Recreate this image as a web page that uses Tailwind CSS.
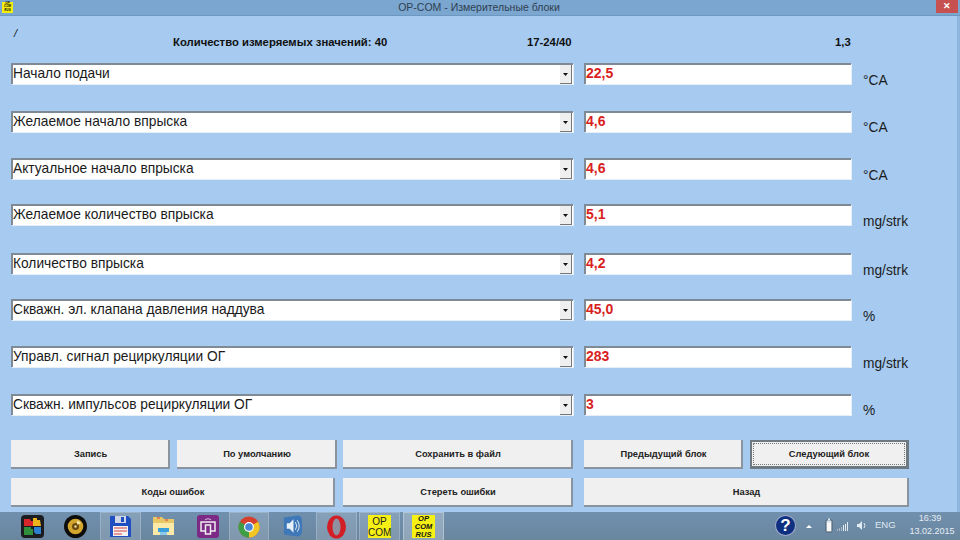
<!DOCTYPE html>
<html><head><meta charset="utf-8"><script src="https://cdn.jsdelivr.net/npm/@tailwindcss/browser@4"></script></head>
<body class="m-0 overflow-hidden">
<div class="w-[960px] h-[540px] flex flex-col bg-[#a6caf0] font-['Liberation_Sans',sans-serif] text-black overflow-hidden">
  <div class="h-4 shrink-0 bg-[#7ba6cf] border-b border-[#6c97c0] flex items-center relative">
    <div class="absolute left-[2px] top-[2px] w-[11px] h-[11px] bg-[#f6ee10] text-[3px] leading-[3.4px] font-bold italic text-center text-black">OP<br>COM<br>RUS</div>
    <div class="w-full text-center text-[10.500px] text-[#2f3f52] pr-[2px]">OP-COM - Измерительные блоки</div>
    <div class="absolute right-[2px] top-0 w-[22px] h-[13px] bg-[#c75050] flex items-center justify-center text-white text-[9px] font-bold">✕</div>
  </div>
  <div class="flex-1 flex flex-col pl-[11px] border-r-[3px] border-[#8fb6de]">
    <div class="h-[47px] shrink-0 relative text-[11.300px] font-bold text-[#111]">
      <div class="absolute left-[3px] top-[9px] italic font-normal text-[11px]">/</div>
      <div class="flex pl-[162px] pt-[19px] leading-[14px]">
        <span class="w-[354px]">Количество измеряемых значений: 40</span>
        <span class="w-[308px]">17-24/40</span>
        <span>1,3</span>
      </div>
    </div>
    <div class="flex flex-col">
      <div class="flex h-[21px]">
        <div class="w-[562px] flex bg-white border-t-2 border-l-2 border-[#808a94] shadow-[1px_1px_0_#e6eef6]"><span class="flex-1 text-[13.750px] leading-[17px] text-[#1a1a1a]">Начало подачи</span><span class="w-[12px] mr-[1px] bg-[#efefef] border-r border-b border-[#777] flex items-center justify-center"><svg width="5" height="3" viewBox="0 0 5 3"><path d="M0 0h5L2.500 3z" fill="#111"/></svg></span></div>
        <div class="w-[267px] ml-[11px] bg-white border-t-2 border-l-2 border-[#808a94] shadow-[1px_1px_0_#e6eef6] text-[14px] leading-[17px] font-bold text-[#d81e1e]">22,5</div>
        <div class="ml-[12px] pt-[10px] text-[13.750px] leading-[16px] text-[#1c1c1c] whitespace-nowrap">°CA</div>
      </div>
      <div class="flex h-[21px] mt-[27px]">
        <div class="w-[562px] flex bg-white border-t-2 border-l-2 border-[#808a94] shadow-[1px_1px_0_#e6eef6]"><span class="flex-1 text-[13.750px] leading-[17px] text-[#1a1a1a]">Желаемое начало впрыска</span><span class="w-[12px] mr-[1px] bg-[#efefef] border-r border-b border-[#777] flex items-center justify-center"><svg width="5" height="3" viewBox="0 0 5 3"><path d="M0 0h5L2.500 3z" fill="#111"/></svg></span></div>
        <div class="w-[267px] ml-[11px] bg-white border-t-2 border-l-2 border-[#808a94] shadow-[1px_1px_0_#e6eef6] text-[14px] leading-[17px] font-bold text-[#d81e1e]">4,6</div>
        <div class="ml-[12px] pt-[9px] text-[13.750px] leading-[16px] text-[#1c1c1c] whitespace-nowrap">°CA</div>
      </div>
      <div class="flex h-[21px] mt-[26px]">
        <div class="w-[562px] flex bg-white border-t-2 border-l-2 border-[#808a94] shadow-[1px_1px_0_#e6eef6]"><span class="flex-1 text-[13.750px] leading-[17px] text-[#1a1a1a]">Актуальное начало впрыска</span><span class="w-[12px] mr-[1px] bg-[#efefef] border-r border-b border-[#777] flex items-center justify-center"><svg width="5" height="3" viewBox="0 0 5 3"><path d="M0 0h5L2.500 3z" fill="#111"/></svg></span></div>
        <div class="w-[267px] ml-[11px] bg-white border-t-2 border-l-2 border-[#808a94] shadow-[1px_1px_0_#e6eef6] text-[14px] leading-[17px] font-bold text-[#d81e1e]">4,6</div>
        <div class="ml-[12px] pt-[10px] text-[13.750px] leading-[16px] text-[#1c1c1c] whitespace-nowrap">°CA</div>
      </div>
      <div class="flex h-[21px] mt-[25px]">
        <div class="w-[562px] flex bg-white border-t-2 border-l-2 border-[#808a94] shadow-[1px_1px_0_#e6eef6]"><span class="flex-1 text-[13.750px] leading-[17px] text-[#1a1a1a]">Желаемое количество впрыска</span><span class="w-[12px] mr-[1px] bg-[#efefef] border-r border-b border-[#777] flex items-center justify-center"><svg width="5" height="3" viewBox="0 0 5 3"><path d="M0 0h5L2.500 3z" fill="#111"/></svg></span></div>
        <div class="w-[267px] ml-[11px] bg-white border-t-2 border-l-2 border-[#808a94] shadow-[1px_1px_0_#e6eef6] text-[14px] leading-[17px] font-bold text-[#d81e1e]">5,1</div>
        <div class="ml-[12px] pt-[10px] text-[13.750px] leading-[16px] text-[#1c1c1c] whitespace-nowrap">mg/strk</div>
      </div>
      <div class="flex h-[21px] mt-[28px]">
        <div class="w-[562px] flex bg-white border-t-2 border-l-2 border-[#808a94] shadow-[1px_1px_0_#e6eef6]"><span class="flex-1 text-[13.750px] leading-[17px] text-[#1a1a1a]">Количество впрыска</span><span class="w-[12px] mr-[1px] bg-[#efefef] border-r border-b border-[#777] flex items-center justify-center"><svg width="5" height="3" viewBox="0 0 5 3"><path d="M0 0h5L2.500 3z" fill="#111"/></svg></span></div>
        <div class="w-[267px] ml-[11px] bg-white border-t-2 border-l-2 border-[#808a94] shadow-[1px_1px_0_#e6eef6] text-[14px] leading-[17px] font-bold text-[#d81e1e]">4,2</div>
        <div class="ml-[12px] pt-[10px] text-[13.750px] leading-[16px] text-[#1c1c1c] whitespace-nowrap">mg/strk</div>
      </div>
      <div class="flex h-[21px] mt-[25px]">
        <div class="w-[562px] flex bg-white border-t-2 border-l-2 border-[#808a94] shadow-[1px_1px_0_#e6eef6]"><span class="flex-1 text-[13.750px] leading-[17px] text-[#1a1a1a]">Скважн. эл. клапана давления наддува</span><span class="w-[12px] mr-[1px] bg-[#efefef] border-r border-b border-[#777] flex items-center justify-center"><svg width="5" height="3" viewBox="0 0 5 3"><path d="M0 0h5L2.500 3z" fill="#111"/></svg></span></div>
        <div class="w-[267px] ml-[11px] bg-white border-t-2 border-l-2 border-[#808a94] shadow-[1px_1px_0_#e6eef6] text-[14px] leading-[17px] font-bold text-[#d81e1e]">45,0</div>
        <div class="ml-[12px] pt-[10px] text-[13.750px] leading-[16px] text-[#1c1c1c] whitespace-nowrap">%</div>
      </div>
      <div class="flex h-[21px] mt-[26px]">
        <div class="w-[562px] flex bg-white border-t-2 border-l-2 border-[#808a94] shadow-[1px_1px_0_#e6eef6]"><span class="flex-1 text-[13.750px] leading-[17px] text-[#1a1a1a]">Управл. сигнал рециркуляции ОГ</span><span class="w-[12px] mr-[1px] bg-[#efefef] border-r border-b border-[#777] flex items-center justify-center"><svg width="5" height="3" viewBox="0 0 5 3"><path d="M0 0h5L2.500 3z" fill="#111"/></svg></span></div>
        <div class="w-[267px] ml-[11px] bg-white border-t-2 border-l-2 border-[#808a94] shadow-[1px_1px_0_#e6eef6] text-[14px] leading-[17px] font-bold text-[#d81e1e]">283</div>
        <div class="ml-[12px] pt-[10px] text-[13.750px] leading-[16px] text-[#1c1c1c] whitespace-nowrap">mg/strk</div>
      </div>
      <div class="flex h-[21px] mt-[27px]">
        <div class="w-[562px] flex bg-white border-t-2 border-l-2 border-[#808a94] shadow-[1px_1px_0_#e6eef6]"><span class="flex-1 text-[13.750px] leading-[17px] text-[#1a1a1a]">Скважн. импульсов рециркуляции ОГ</span><span class="w-[12px] mr-[1px] bg-[#efefef] border-r border-b border-[#777] flex items-center justify-center"><svg width="5" height="3" viewBox="0 0 5 3"><path d="M0 0h5L2.500 3z" fill="#111"/></svg></span></div>
        <div class="w-[267px] ml-[11px] bg-white border-t-2 border-l-2 border-[#808a94] shadow-[1px_1px_0_#e6eef6] text-[14px] leading-[17px] font-bold text-[#d81e1e]">3</div>
        <div class="ml-[12px] pt-[9px] text-[13.750px] leading-[16px] text-[#1c1c1c] whitespace-nowrap">%</div>
      </div>
    </div>
    <div class="mt-[25px] flex h-[29px] text-[9.300px] font-bold text-[#222]">
      <div class="w-[159px] bg-[#f0f0f0] border-r-2 border-b-2 border-[#8a949e] flex items-center justify-center pt-[3px] pl-[2px]">Запись</div>
      <div class="w-[160px] ml-[7px] bg-[#f0f0f0] border-r-2 border-b-2 border-[#8a949e] flex items-center justify-center pt-[3px] pl-[2px]">По умолчанию</div>
      <div class="w-[230px] ml-[6px] bg-[#f0f0f0] border-r-2 border-b-2 border-[#8a949e] flex items-center justify-center pt-[3px] pl-[2px]">Сохранить в файл</div>
      <div class="w-[159px] ml-[11px] bg-[#f0f0f0] border-r-2 border-b-2 border-[#8a949e] flex items-center justify-center pt-[3px] pl-[2px]">Предыдущий блок</div>
      <div class="w-[159px] ml-[7px] bg-[#f0f0f0] border-2 border-r-3 border-b-3 border-[#6f7982] flex items-center justify-center p-[1px]"><div class="w-full h-full border border-dotted border-[#777] flex items-center justify-center pt-[1px]">Следующий блок</div></div>
    </div>
    <div class="mt-[9px] flex h-[29px] text-[9.300px] font-bold text-[#222]">
      <div class="w-[324px] bg-[#f0f0f0] border-r-2 border-b-2 border-[#8a949e] flex items-center justify-center pt-[3px] pl-[2px]">Коды ошибок</div>
      <div class="w-[230px] ml-[8px] bg-[#f0f0f0] border-r-2 border-b-2 border-[#8a949e] flex items-center justify-center pt-[3px] pl-[2px]">Стереть ошибки</div>
      <div class="w-[325px] ml-[11px] bg-[#f0f0f0] border-r-2 border-b-2 border-[#8a949e] flex items-center justify-center pt-[3px] pl-[2px]">Назад</div>
    </div>
  </div>
  <div class="h-[28px] shrink-0 bg-[linear-gradient(#7090ae,#6a869f)] flex items-stretch relative">
    <div class="w-[41px] ml-[12px] flex items-center justify-center">
      <svg width="23" height="23" viewBox="0 0 23 23"><rect width="23" height="23" rx="4" fill="#1c1c20"/><path d="M3 4h6l1 2h2v5H3z" fill="#d8262a"/><path d="M12 3h4v2h3l1 6h-8z" fill="#eeb21c"/><path d="M3 12h7v2h2v6H3z" fill="#2f8f3a"/><path d="M13 12h7v7h-5l-2-2z" fill="#2f7fd0"/></svg>
    </div>
    <div class="w-[41px] ml-[2px] flex items-center justify-center">
      <svg width="23" height="23" viewBox="0 0 23 23"><circle cx="11.500" cy="11.500" r="11.500" fill="#0c0c0c"/><circle cx="11.500" cy="11.500" r="7.800" fill="#d2a52c"/><circle cx="11.500" cy="11.500" r="3.500" fill="#6b4a10"/><circle cx="11.500" cy="11.500" r="1.200" fill="#e8d9a0"/><path d="M13 5.500a7 7 0 0 1 4 3l-4 1z" fill="#f4e6a8"/></svg>
    </div>
    <div class="w-[41px] ml-[4px] flex items-center justify-center bg-white/15 border-x border-t border-white/20">
      <svg width="23" height="23" viewBox="0 0 23 23"><path d="M1 1h18l3 3v18H1z" fill="#1f4fc0"/><rect x="6" y="1" width="11" height="7" fill="#cfd6e6"/><rect x="12" y="2" width="3" height="5" fill="#1f4fc0"/><rect x="4" y="11" width="15" height="10" fill="#f2f2f2"/><path d="M5 13h13M5 16h13M5 19h8" stroke="#d84040"/></svg>
    </div>
    <div class="w-[41px] ml-[2px] flex items-center justify-center">
      <svg width="23" height="22" viewBox="0 0 23 22"><path d="M1 2h9l2 2h10v16H1z" fill="#e8c766"/><path d="M5 3l3 0M13 5h3" stroke="#d84040"/><path d="M1 8h21v12H1z" fill="#fbe9a8"/><rect x="6" y="13" width="11" height="4" fill="#3aa0dc"/><rect x="8" y="17" width="7" height="3" fill="#8bcbe8"/></svg>
    </div>
    <div class="w-[41px] ml-[3px] flex items-center justify-center">
      <svg width="22" height="23" viewBox="0 0 22 23"><rect width="22" height="23" rx="3" fill="#7c2a86"/><path d="M4 7h14v9H4z" fill="none" stroke="#eee" stroke-width="1.500"/><rect x="8.500" y="10" width="5" height="9" fill="#7c2a86" stroke="#eee" stroke-width="1.500"/><path d="M8 4.500q3-1.500 6 0" fill="none" stroke="#d9b8dd"/></svg>
    </div>
    <div class="w-[40px] ml-[1px] flex items-center justify-center bg-white/15 border-x border-t border-white/20">
      <svg width="22" height="22" viewBox="0 0 22 22"><circle cx="11" cy="11" r="10.500" fill="#d8402e"/><path d="M11 11L20.100 5.700A10.500 10.500 0 0 1 11 21.500z" fill="#f3c623"/><path d="M11 11L11 21.500A10.500 10.500 0 0 1 1.900 5.700z" fill="#3f9e45"/><circle cx="11" cy="11" r="5" fill="#fff"/><circle cx="11" cy="11" r="3.800" fill="#4a86d8"/></svg>
    </div>
    <div class="w-[41px] ml-[3px] flex items-center justify-center">
      <svg width="20" height="24" viewBox="0 0 21 24"><path d="M1 3l14-2q5 0 5 6v10q0 6-5 6L1 21z" fill="#3f78b8"/><path d="M4 9h3l4-4v14l-4-4H4z" fill="#e8f0f8"/><path d="M13 8q3 4 0 8M15 6q4 6 0 12" stroke="#e8f0f8" fill="none"/></svg>
    </div>
    <div class="w-[41px] ml-[3px] flex items-center justify-center bg-white/15 border-x border-t border-white/20">
      <svg width="21" height="24" viewBox="0 0 20 24"><ellipse cx="10" cy="12" rx="9.500" ry="11.500" fill="#d21f26"/><ellipse cx="10" cy="12" rx="4" ry="8.500" fill="#8f90a0"/></svg>
    </div>
    <div class="w-[41px] ml-[2px] flex items-center justify-center bg-white/15 border-x border-t border-white/20">
      <div class="w-[23px] h-[23px] bg-[#f6f015] text-[10px] leading-[11px] text-center font-normal text-[#222] pt-[1px]">OP<br>COM</div>
    </div>
    <div class="w-[41px] ml-[3px] flex items-center justify-center bg-white/25 border-x border-t border-white/30">
      <div class="w-[23px] h-[23px] bg-[#f6f015] text-[7.500px] leading-[8px] text-center font-bold italic text-[#111]">OP<br>COM<br>RUS</div>
    </div>
    <div class="absolute left-[775px] top-[3px] w-[21px] h-[21px] rounded-full bg-[#0f2f80] border border-white/60 text-white text-[17px] font-bold leading-[19px] text-center">?</div>
    <div class="absolute left-[806px] top-[13px] w-0 h-0 border-l-[3px] border-r-[3px] border-b-[3px] border-transparent border-b-white"></div>
    <svg class="absolute left-[825px] top-[6px]" width="8" height="15" viewBox="0 0 8 15"><rect x="1" y="2" width="6" height="12" rx="1" fill="#dfe7ee" stroke="#4c5f70"/><rect x="3" y="0.500" width="2" height="2" fill="#dfe7ee"/><rect x="2" y="5" width="4" height="8" fill="#f8f8f8"/></svg>
    <svg class="absolute left-[837px] top-[9px]" width="12" height="11" viewBox="0 0 12 11"><path d="M0.500 10v-2M2.500 10V7M4.500 10V6" stroke="#a9b9c7"/><path d="M6.500 10V4M8.500 10V3M10.500 10V1" stroke="#e4ecf3"/></svg>
    <svg class="absolute left-[856px] top-[7px]" width="12" height="13" viewBox="0 0 12 13"><path d="M1 5h2l3-3v9L3 8H1z" fill="#e4ecf3"/><path d="M8 4q2 2.500 0 5" stroke="#e4ecf3" fill="none"/></svg>
    <div class="absolute left-[875px] top-[6px] text-[9.500px] leading-[14px] text-[#dfe8f0]">ENG</div>
    <div class="absolute left-[900px] w-[60px] top-0 text-center text-[9px] leading-[13px] text-[#e4ecf3]">16:39<br><span class="pl-[4px]">13.02.2015</span></div>
  </div>
</div>
</body></html>
